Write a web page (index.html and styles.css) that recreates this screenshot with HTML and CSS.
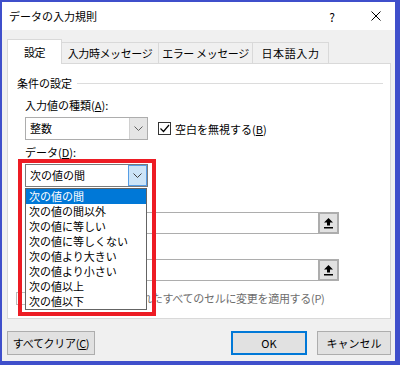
FILE: index.html
```html
<!DOCTYPE html>
<html lang="ja">
<head>
    <meta charset="UTF-8">
    <title>データの入力規則</title>
    <link rel="stylesheet" href="styles.css">
</head>
<body>

    <div class="window">
        <div class="titlebar">
            <span class="title">データの入力規則</span>
            <span class="title-btn help">?</span>
            <span class="title-btn close">
                <svg width="10" height="10" viewBox="0 0 10 10"><path d="M0.5 0.5 L9.5 9.5 M9.5 0.5 L0.5 9.5" stroke="#000" stroke-width="1" fill="none"/></svg>
            </span>
        </div>

        <div class="body">
            <div class="tabs">
                <div class="tab tab-settings active">設定</div>
                <div class="tab tab-input">入力時メッセージ</div>
                <div class="tab tab-error">エラー メッセージ</div>
                <div class="tab tab-ime">日本語入力</div>
            </div>

            <div class="panel">
                <div class="group-title">条件の設定</div>

                <div class="group">
                    <div class="label first">入力値の種類(<u>A</u>):</div>
                    <div class="row">
                        <div class="combo">
                            <span class="combo-text">整数</span>
                            <span class="combo-btn">
                                <svg width="9" height="5" viewBox="0 0 9 5"><path d="M0.5 0.5 L4.5 4.5 L8.5 0.5" stroke="#606060" fill="none"/></svg>
                            </span>
                        </div>
                        <label class="check">
                            <span class="box">
                                <svg width="11" height="11" viewBox="0 0 11 11"><path d="M1.5 5.5 L4.5 8.5 L10 2" stroke="#000" stroke-width="1.2" fill="none"/></svg>
                            </span>
                            空白を無視する(<u>B</u>)
                        </label>
                    </div>

                    <div class="label">データ(<u>D</u>):</div>
                    <div class="combo open">
                        <span class="combo-text">次の値の間</span>
                        <span class="combo-btn">
                            <svg width="9" height="5" viewBox="0 0 9 5"><path d="M0.5 0.5 L4.5 4.5 L8.5 0.5" stroke="#404040" fill="none"/></svg>
                        </span>
                    </div>

                    <div class="label">最小値(<u>M</u>):</div>
                    <div class="ref-input">
                        <div class="field"></div>
                        <span class="ref-btn">
                            <svg width="11" height="12" viewBox="0 0 11 12"><path d="M5.5 1 L10 5.5 L7 5.5 L7 8.5 L4 8.5 L4 5.5 L1 5.5 Z" fill="#000"/><rect x="1" y="10" width="9" height="1.5" fill="#000"/></svg>
                        </span>
                    </div>

                    <div class="label">最大値(<u>X</u>):</div>
                    <div class="ref-input">
                        <div class="field"></div>
                        <span class="ref-btn">
                            <svg width="11" height="12" viewBox="0 0 11 12"><path d="M5.5 1 L10 5.5 L7 5.5 L7 8.5 L4 8.5 L4 5.5 L1 5.5 Z" fill="#000"/><rect x="1" y="10" width="9" height="1.5" fill="#000"/></svg>
                        </span>
                    </div>
                </div>

                <label class="check apply">
                    <span class="box"></span>
                    同じ入力規則が設定されたすべてのセルに変更を適用する(P)
                </label>

                <!-- 開いたドロップダウン -->
                <ul class="dropdown">
                    <li class="selected">次の値の間</li>
                    <li>次の値の間以外</li>
                    <li>次の値に等しい</li>
                    <li>次の値に等しくない</li>
                    <li>次の値より大きい</li>
                    <li>次の値より小さい</li>
                    <li>次の値以上</li>
                    <li>次の値以下</li>
                </ul>

                <div class="highlight"></div>
            </div>

            <div class="footer">
                <button class="btn btn-clear">すべてクリア(<u>C</u>)</button>
                <div class="footer-right">
                    <button class="btn default">OK</button>
                    <button class="btn">キャンセル</button>
                </div>
            </div>
        </div>
    </div>

</body>
</html>
```

FILE: styles.css
```css
body {
    margin: 0;
    font-family: "Noto Sans CJK JP", "Noto Sans", sans-serif;
    font-size: 11px;
    color: #000000;
}

.window {
    width: 400px;
    height: 365px;
    box-sizing: border-box;
    border-style: solid;
    border-color: #3f4fcb;
    border-width: 2px 5px 4px 2px;
    background-color: #f0f0f0;
    display: flex;
    flex-direction: column;
}

.titlebar {
    height: 28px;
    background-color: #ffffff;
    display: flex;
    align-items: center;
    padding-left: 7px;
}

.title {
    flex: 1;
    font-size: 11px;
}

.title-btn {
    display: flex;
    justify-content: center;
    align-items: center;
    font-size: 12px;
}

.help {
    width: 50px;
}

.close {
    width: 38px;
}

.body {
    flex: 1;
    padding: 9px 4px 0 5px;
    display: flex;
    flex-direction: column;
}

.tabs {
    display: flex;
    align-items: flex-start;
    height: 25px;
    margin-bottom: -1px;
    position: relative;
    z-index: 1;
}

.tab {
    height: 21px;
    margin-top: 3px;
    line-height: 20px;
    text-align: center;
    white-space: nowrap;
    letter-spacing: -0.4px;
    border: 1px solid #d9d9d9;
    border-bottom: none;
    margin-left: -1px;
    background-color: #f0f0f0;
    box-sizing: border-box;
}

.tab-settings { width: 55px; }
.tab-input { width: 98px; }
.tab-error { width: 95px; }
.tab-ime { width: 77px; letter-spacing: 0.6px; }

.tab.active {
    height: 25px;
    margin-top: 0;
    margin-left: 0;
    line-height: 25px;
    background-color: #ffffff;
    position: relative;
    z-index: 2;
}

.panel {
    position: relative;
    height: 256px;
    box-sizing: border-box;
    background-color: #ffffff;
    border: 1px solid #d9d9d9;
    padding: 11px 7px 0 9px;
}

.group-title {
    display: flex;
    align-items: center;
    line-height: 16px;
}

.group-title::after {
    content: "";
    flex: 1;
    height: 1px;
    background-color: #dcdcdc;
    margin-left: 5px;
}

.group {
    padding-left: 8px;
}

.label {
    line-height: 16px;
    margin-top: 4px;
}

.label.first {
    margin-top: 6px;
}

.label + .row,
.label + .combo {
    margin-top: 4px;
}

.row {
    display: flex;
    align-items: center;
}

.combo {
    width: 123px;
    height: 23px;
    box-sizing: border-box;
    border: 1px solid #adadad;
    background-color: #ffffff;
    display: flex;
}

.combo-text {
    flex: 1;
    padding-left: 4px;
    line-height: 21px;
}

.combo-btn {
    width: 17px;
    background-color: #e5e5e5;
    border-left: 1px solid #d0d0d0;
    display: flex;
    justify-content: center;
    align-items: center;
}

.combo.open {
    border-color: #7a7a7a;
}

.combo.open .combo-btn {
    background-color: #cce4f7;
    border: 1px solid #569de5;
}

.check {
    display: flex;
    align-items: center;
    margin-left: 10px;
    white-space: nowrap;
}

.box {
    width: 13px;
    height: 13px;
    box-sizing: border-box;
    border: 1px solid #333333;
    background-color: #ffffff;
    margin-right: 4px;
    display: flex;
    justify-content: center;
    align-items: center;
}

.ref-input {
    display: flex;
    width: 314px;
    height: 22px;
    margin-top: 5px;
}

.field {
    flex: 1;
    border: 1px solid #adadad;
    border-right: none;
    background-color: #ffffff;
}

.ref-btn {
    width: 21px;
    box-sizing: border-box;
    border: 2px solid #adadad;
    background-color: #e1e1e1;
    display: flex;
    justify-content: center;
    align-items: center;
}

.check.apply {
    margin: 9px 0 0 -1px;
    color: #6d6d6d;
    letter-spacing: -0.3px;
}

.check.apply .box {
    border-color: #bcbcbc;
    margin-right: 5px;
}

.dropdown {
    position: absolute;
    left: 17px;
    top: 124px;
    width: 122px;
    margin: 0;
    padding: 0;
    list-style: none;
    box-sizing: border-box;
    border: 1px solid #646464;
    background-color: #ffffff;
    z-index: 3;
}

.dropdown li {
    height: 15px;
    line-height: 15px;
    padding-left: 3px;
}

.dropdown li.selected {
    background-color: #0078d7;
    color: #ffffff;
}

.highlight {
    position: absolute;
    left: 10px;
    top: 95px;
    width: 138px;
    height: 157px;
    box-sizing: border-box;
    border: 4px solid #ed1c24;
    z-index: 4;
}

.footer {
    display: flex;
    justify-content: space-between;
    margin-top: 12px;
}

.footer-right {
    display: flex;
    gap: 10px;
}

.btn {
    height: 24px;
    padding: 0;
    white-space: nowrap;
    font-family: inherit;
    font-size: 11px;
    background-color: #e1e1e1;
    border: 1px solid #adadad;
    color: #000000;
}

.btn-clear {
    width: 88px;
    letter-spacing: -0.3px;
}

.footer-right .btn {
    width: 74px;
}

.btn.default {
    width: 76px;
    border: 2px solid #0078d7;
}

u {
    text-decoration: underline;
}
```
